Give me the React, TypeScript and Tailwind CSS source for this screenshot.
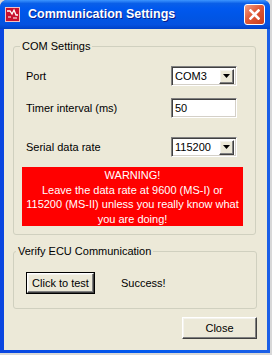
import React from 'react';

// XP-style sunken field border used by the inputs and combo boxes
const sunken =
  'border border-t-[#808080] border-l-[#808080] border-b-white border-r-white shadow-[inset_1px_1px_0_#404040,inset_-1px_-1px_0_#d4d0c8] bg-white';

const raised =
  'bg-[#ECE9D8] border border-t-white border-l-white border-b-[#404040] border-r-[#404040] shadow-[inset_-1px_-1px_0_#808080,inset_1px_1px_0_#f4f3ee]';

const ComboBox: React.FC<{ value: string }> = ({ value }) => (
  <div className={`${sunken} w-[66px] h-[20px] flex items-center justify-between pl-[3px] pr-[2px]`}>
    <span className="leading-none">{value}</span>
    <div className={`${raised} w-[15px] h-[15px] flex items-center justify-center`}>
      <svg width="7" height="4" viewBox="0 0 7 4">
        <path d="M0 0h7L3.5 4z" fill="#000" />
      </svg>
    </div>
  </div>
);

const AppIcon = () => (
  <svg width="15" height="15" viewBox="0 0 15 15">
    <rect x="0" y="0" width="15" height="15" fill="#c8102e" />
    <rect x="0.5" y="0.5" width="14" height="14" fill="none" stroke="#f3c0c0" strokeWidth="1" />
    <path d="M2 4h3l2 3 2-4 2 5h2" stroke="#fff" strokeWidth="1.3" fill="none" />
    <path d="M3 10h3M8 11h4" stroke="#fff" strokeWidth="1" />
  </svg>
);

const App: React.FC = () => {
  return (
    <div className="w-[272px] h-[355px] bg-[#d8d8d8] font-['Liberation_Sans',Arial,sans-serif] text-[11px] text-black">
      <div className="w-[270px] h-[353px] flex flex-col rounded-t-[7px] bg-[#0831d9] bg-[linear-gradient(to_right,#0a46e0,#0058ee_50%,#1b5fe6)]">
        {/* title bar */}
        <div className="h-[29px] flex items-center pl-[5px] pr-[5px] rounded-t-[7px] bg-[linear-gradient(to_bottom,#3d95ff_0%,#0a5fe8_12%,#0058ee_30%,#0055e5_60%,#0551e0_85%,#0041c8_100%)]">
          <AppIcon />
          <span className="ml-[8px] text-white font-bold text-[12.5px] [text-shadow:1px_1px_0_#0a1e8c]">
            Communication Settings
          </span>
          <div className="ml-auto w-[21px] h-[21px] rounded-[3px] border border-white bg-[linear-gradient(135deg,#f0a088,#e05a38_45%,#c83c1c)] flex items-center justify-center">
            <svg width="11" height="11" viewBox="0 0 11 11">
              <path d="M1.5 1.5l8 8M9.5 1.5l-8 8" stroke="#fff" strokeWidth="2.6" strokeLinecap="square" />
            </svg>
          </div>
        </div>

        {/* client area */}
        <div className="flex-1 ml-[4px] mr-[3px] mb-[3px] bg-[#ECE9D8] flex flex-col px-[9px]">
          <fieldset className="mt-[11px] border border-[#d0d0bf] rounded-[3px] w-[243px] pb-[8px]">
            <legend className="ml-[6px] px-[2px] leading-[13px]">COM Settings</legend>
            <div className="flex items-center justify-between pl-[12px] pr-[18px] mt-[13px]">
              <span>Port</span>
              <ComboBox value="COM3" />
            </div>
            <div className="flex items-center justify-between pl-[12px] pr-[18px] mt-[12px]">
              <span>Timer interval (ms)</span>
              <div className={`${sunken} w-[66px] h-[20px] flex items-center pl-[3px]`}>
                <span className="leading-none">50</span>
              </div>
            </div>
            <div className="flex items-center justify-between pl-[12px] pr-[18px] mt-[19px]">
              <span>Serial data rate</span>
              <ComboBox value="115200" />
            </div>
            <div className="ml-[8px] mr-[12px] mt-[10px] h-[59px] bg-[#ff0000] text-white text-center leading-[14.5px] pt-[1px]">
              WARNING!
              <br />
              Leave the data rate at 9600 (MS-I) or
              <br />
              115200 (MS-II) unless you really know what
              <br />
              you are doing!
            </div>
          </fieldset>

          <fieldset className="mt-[10px] border border-[#d0d0bf] rounded-[3px] w-[244px] pb-[14px]">
            <legend className="ml-[2px] px-[2px] leading-[13px]">Verify ECU Communication</legend>
            <div className="flex items-center pl-[12px] mt-[14px]">
              <div className="border border-black">
                <div className={`${raised} w-[67px] h-[20px] flex items-center justify-center`}>
                  Click to test
                </div>
              </div>
              <span className="ml-[26px]">Success!</span>
            </div>
          </fieldset>

          <div className="flex justify-end mt-[8px] pr-[1px]">
            <div className={`${raised} w-[75px] h-[22px] flex items-center justify-center`}>Close</div>
          </div>
        </div>
      </div>
    </div>
  );
};

export default App;
